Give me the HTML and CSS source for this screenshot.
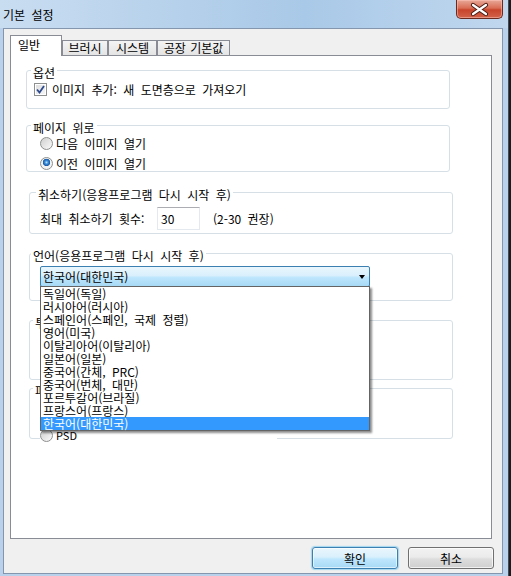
FILE: index.html
```html
<!DOCTYPE html>
<html lang="ko">

<head>
  <meta charset="UTF-8" />
  <title>기본 설정</title>
  <link rel="stylesheet" href="styles.css">
</head>

<body>
  <div class="window">
    <div class="titlebar">
      <span class="title">기본 설정</span>
      <div class="close">
        <svg width="45" height="17" viewBox="0 0 45 17">
          <path d="M16 4 L29 13 M29 4 L16 13" stroke="#4a1c14" stroke-width="4.2" stroke-linecap="round" />
          <path d="M16 4 L29 13 M29 4 L16 13" stroke="#ffffff" stroke-width="2.2" stroke-linecap="round" />
        </svg>
      </div>
    </div>

    <div class="client">
      <div class="tabs">
        <div class="tab active">일반</div>
        <div class="tab w-brush">브러시</div>
        <div class="tab w-system">시스템</div>
        <div class="tab w-factory">공장 기본값</div>
      </div>

      <div class="panel">
        <fieldset class="group g-option">
          <legend>옵션</legend>
          <label class="row check-row">
            <span class="checkbox">
              <svg width="9" height="9" viewBox="0 0 9 9">
                <path d="M1 4.5 L3.5 7.5 L8 1" fill="none" stroke="#2c4a8c" stroke-width="1.8" />
              </svg>
            </span>
            이미지 추가: 새 도면층으로 가져오기
          </label>
        </fieldset>

        <fieldset class="group g-page">
          <legend>페이지 위로</legend>
          <label class="row radio-row"><span class="radio"></span>다음 이미지 열기</label>
          <label class="row radio-row gap"><span class="radio on"></span>이전 이미지 열기</label>
        </fieldset>

        <fieldset class="group g-undo">
          <legend>취소하기(응용프로그램 다시 시작 후)</legend>
          <div class="undo-row">
            <span class="undo-label">최대 취소하기 횟수:</span>
            <input class="textbox" type="text" value="30">
            <span class="hint">(2-30 권장)</span>
          </div>
        </fieldset>

        <fieldset class="group g-lang">
          <legend>언어(응용프로그램 다시 시작 후)</legend>
          <div class="combo-wrap">
            <div class="combo">
              <span>한국어(대한민국)</span>
              <span class="arrow"></span>
            </div>
            <ul class="dropdown">
              <li>독일어(독일)</li>
              <li>러시아어(러시아)</li>
              <li>스페인어(스페인, 국제 정렬)</li>
              <li>영어(미국)</li>
              <li>이탈리아어(이탈리아)</li>
              <li>일본어(일본)</li>
              <li>중국어(간체, PRC)</li>
              <li>중국어(번체, 대만)</li>
              <li>포르투갈어(브라질)</li>
              <li>프랑스어(프랑스)</li>
              <li class="selected">한국어(대한민국)</li>
            </ul>
          </div>
        </fieldset>

        <fieldset class="group g-bg">
          <legend>투명</legend>
          <div class="hidden-rows"></div>
        </fieldset>

        <fieldset class="group g-format">
          <legend>파일</legend>
          <div class="format-rows">
            <label class="small-row"><span class="radio"></span>PSD</label>
          </div>
        </fieldset>
      </div>

      <div class="buttons">
        <button class="btn default">확인</button>
        <button class="btn">취소</button>
      </div>
    </div>
  </div>
</body>

</html>
```
FILE: styles.css
```css
* {
  margin: 0px;
  padding: 0px;
  box-sizing: border-box;
}

body {
  width: 511px;
  height: 576px;
  overflow: hidden;
  background-color: #1c1c1c;
  font-family: "Noto Sans CJK KR", "Noto Sans", sans-serif;
  font-size: 12px;
  word-spacing: 3px;
  color: #000;
}

.window {
  width: 509px;
  height: 576px;
  display: flex;
  flex-direction: column;
  padding: 0 5px 2px 3px;
  border-right: 1px solid #3d4b5c;
  background: linear-gradient(to right, #c9ddf1 0%, #b3cfea 40%, #a9c9e8 60%, #c0d7ee 100%) top / 100% 28px no-repeat, #b9d1ea;
}

.titlebar {
  height: 28px;
  display: flex;
  align-items: flex-start;
  flex-shrink: 0;
}

.title {
  line-height: 15px;
  margin-top: 7px;
}

.close {
  margin-left: auto;
  width: 47px;
  height: 19px;
  border: 1px solid #6b2a20;
  border-top: 0;
  border-radius: 0 0 5px 5px;
  background: linear-gradient(#e8a898 0%, #d96d55 45%, #c7442b 55%, #d2634a 100%);
  box-shadow: inset 0 0 0 1px rgba(255, 200, 190, 0.5);
  display: flex;
  align-items: center;
  justify-content: center;
}

.client {
  height: 546px;
  border: 1px solid #8496ad;
  background-color: #f0f0f0;
  padding: 6px 8px 4px 6px;
  display: flex;
  flex-direction: column;
}

/* tabs */
.tabs {
  display: flex;
  align-items: flex-end;
  height: 20px;
}

.tab {
  height: 15px;
  border: 1px solid #898c95;
  border-bottom: 0;
  background: linear-gradient(#f4f4f4, #e4e4e4);
  line-height: 13px;
  text-align: center;
  word-spacing: 1px;
}

.tab.active {
  width: 52px;
  height: 21px;
  margin-bottom: -1px;
  background: #fff;
  position: relative;
  z-index: 1;
  text-align: left;
  padding: 1px 0 0 7px;
  line-height: 15px;
}

.w-brush {
  width: 46px;
}

.w-system {
  width: 49px;
}

.w-factory {
  width: 73px;
}

.panel {
  width: 482px;
  height: 484px;
  border: 1px solid #898c95;
  background-color: #fff;
  display: flex;
  flex-direction: column;
}

/* group boxes */
.group {
  width: 424px;
  margin-left: 18px;
  border: 1px solid #d5dfe5;
  border-radius: 3px;
  min-width: 0;
}

.group legend {
  padding: 4px 2px 0;
  line-height: 15px;
  margin-left: 3px;
}

.g-option {
  margin-left: 15px;
  margin-top: 5px;
  padding: 2px 0 11px;
}

.g-option legend {
  margin-left: 4px;
}

.check-row {
  margin-left: 7px;
}

.g-page {
  margin-left: 15px;
  margin-top: 7px;
  padding: 1px 0 0;
}

.g-page legend {
  margin-left: 4px;
}

.g-page .radio-row {
  margin-left: 13px;
}

.g-undo {
  margin-top: 11px;
  padding: 5px 0 3px;
}

.g-undo legend {
  margin-left: 6px;
}

.g-lang {
  margin-top: 10px;
  padding: 3px 0 13px;
}

.g-lang legend {
  margin-left: 1px;
}

.g-bg {
  margin-top: 10px;
}

.g-format {
  margin-top: -1px;
}

.row {
  display: flex;
  align-items: center;
  height: 15px;
  line-height: 15px;
}

.row.gap {
  margin-top: 5px;
}

.check-row {
  gap: 5px;
}

.radio-row {
  gap: 3px;
}

.checkbox {
  width: 13px;
  height: 13px;
  border: 1px solid #8e8f8f;
  background: linear-gradient(135deg, #dcdcdc, #f8f8f8);
  box-shadow: inset 0 0 0 1px #fff;
  display: flex;
  align-items: center;
  justify-content: center;
}

.radio {
  width: 13px;
  height: 13px;
  border-radius: 50%;
  border: 1px solid #8e8f8f;
  background: linear-gradient(135deg, #cfcfcf, #fbfbfb);
  flex-shrink: 0;
}

.radio.on {
  background: radial-gradient(circle at 50% 40%, #bfe6fb 0px, #3d8fdc 1.6px, #1b5aa6 3.4px, #f2f2f2 4px), linear-gradient(135deg, #cfcfcf, #fbfbfb);
}

.undo-row {
  display: flex;
  align-items: center;
  height: 23px;
  margin-left: 10px;
}

.undo-label {
  width: 117px;
}

.textbox {
  width: 43px;
  height: 23px;
  border: 1px solid #e3e9ef;
  border-top-color: #abadb3;
  padding-left: 3px;
  font: inherit;
  outline: none;
}

.hint {
  margin-left: 13px;
}

/* language combo */
.combo-wrap {
  position: relative;
  width: 330px;
  margin-left: 10px;
}

.combo {
  height: 21px;
  border: 1px solid #3c7fb1;
  border-radius: 2px;
  background: linear-gradient(#eaf6fd 0%, #d9f0fc 45%, #bee6fd 55%, #a7d9f5 100%);
  display: flex;
  align-items: center;
  padding: 0 4px 0 2px;
  position: relative;
  z-index: 2;
}

.arrow {
  margin-left: auto;
  border-left: 3.5px solid transparent;
  border-right: 3.5px solid transparent;
  border-top: 4px solid #000;
}

.dropdown {
  list-style: none;
  position: absolute;
  top: 20px;
  left: 0;
  width: 330px;
  z-index: 3;
  border: 1px solid #646464;
  background-color: #fff;
  box-shadow: 2px 2px 2px rgba(0, 0, 0, 0.45);
}

.dropdown li {
  height: 13px;
  line-height: 13px;
  padding-left: 2px;
  white-space: nowrap;
}

.dropdown li.selected {
  background-color: #3399ff;
  color: #fff;
}

.hidden-rows {
  height: 49px;
}

.format-rows {
  padding-top: 31px;
  margin-bottom: -4px;
  margin-left: 10px;
}

.small-row {
  height: 13px;
  display: flex;
  align-items: center;
  gap: 3px;
  width: 237px;
  background-color: #fff;
  line-height: 13px;
  font-size: 11px;
}

/* buttons */
.buttons {
  display: flex;
  justify-content: flex-end;
  gap: 10px;
  margin-top: 8px;
}

.btn {
  width: 86px;
  height: 22px;
  border: 1px solid #707070;
  border-radius: 3px;
  background: linear-gradient(#f2f2f2 0%, #ebebeb 45%, #dddddd 55%, #cfcfcf 100%);
  box-shadow: inset 0 0 0 1px rgba(255, 255, 255, 0.7);
  font: inherit;
  word-spacing: 3px;
}

.btn.default {
  border-color: #3c7fb1;
  background: linear-gradient(#eaf6fd 0%, #d9f0fc 45%, #bee6fd 55%, #a7d9f5 100%);
  box-shadow: inset 0 0 0 1px rgba(255, 255, 255, 0.6), 0 0 1px 1px rgba(80, 190, 240, 0.5);
}
```
